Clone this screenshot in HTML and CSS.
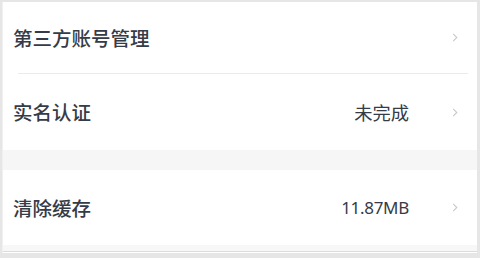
FILE: index.html
```html
<!DOCTYPE html>
<html lang="zh-CN">
<head>
  <meta charset="UTF-8" />
  <meta name="viewport" content="width=device-width, initial-scale=1.0"/>
  <title>设置</title>
  <link rel="stylesheet" href="styles.css">
</head>
<body>

  <div class="screen">
    <!-- 账号 -->
    <div class="group">
      <div class="row row-first">
        <span class="label">第三方账号管理</span>
        <span class="value"></span>
        <svg class="arrow" viewBox="0 0 6 10"><polyline points="1,1 5,5 1,9" /></svg>
      </div>
      <div class="divider"></div>
      <div class="row row-second">
        <span class="label">实名认证</span>
        <span class="value">未完成</span>
        <svg class="arrow" viewBox="0 0 6 10"><polyline points="1,1 5,5 1,9" /></svg>
      </div>
    </div>

    <div class="gap"></div>

    <!-- 缓存 -->
    <div class="group">
      <div class="row row-third">
        <span class="label">清除缓存</span>
        <span class="value num">11.87MB</span>
        <svg class="arrow" viewBox="0 0 6 10"><polyline points="1,1 5,5 1,9" /></svg>
      </div>
    </div>

    <div class="gap gap-bottom"></div>
  </div>

</body>
</html>
```

FILE: styles.css
```css
* {
  margin: 0;
  padding: 0;
  box-sizing: border-box;
}

body {
  font-family: "Noto Sans CJK SC", "Noto Sans", sans-serif;
  background-color: #e6e6e6;
  color: #353b47;
  width: 480px;
  height: 258px;
  overflow: hidden;
  padding: 2px 3px 0 2px;
}

.screen {
  background: #fff;
  border-left: 1px solid #f0f0f0;
  height: 251px;
  display: flex;
  flex-direction: column;
}

.row {
  display: flex;
  align-items: center;
  padding-left: 10px;
  padding-right: 19px;
}

.row-first {
  height: 71px;
}

.row-second {
  height: 76px;
}

.row-third {
  height: 75px;
}

.label {
  font-size: 19.5px;
  font-weight: 500;
  line-height: 1;
}

.value {
  margin-left: auto;
  font-size: 18.3px;
  line-height: 1;
  margin-right: 43px;
}

.value.num {
  font-family: "Noto Sans", sans-serif;
  font-size: 17px;
  letter-spacing: -0.3px;
}

.arrow {
  width: 6px;
  height: 9px;
  fill: none;
  stroke: #c9c9c9;
  stroke-width: 1.2;
}

.divider {
  height: 1px;
  background: #e6ecf2;
  margin: 0 9px 0 15px;
}

.gap {
  height: 20px;
  background: #f6f6f6;
}

.gap-bottom {
  height: 7px;
  background: #f7f7f7;
  border-bottom: 1px solid #dcdcdc;
  flex: none;
}
```
